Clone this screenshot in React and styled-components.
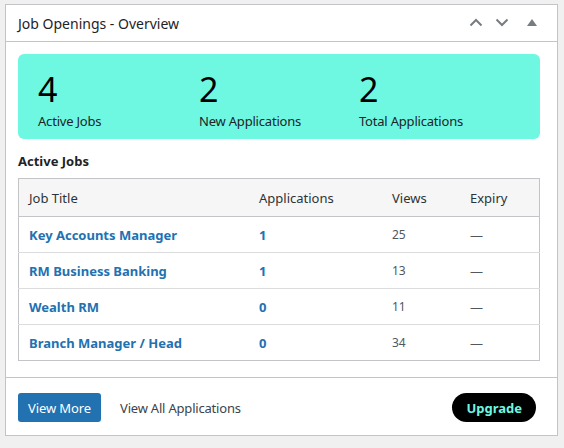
import React from "react";
import styled, { createGlobalStyle } from "styled-components";

const GlobalStyle = createGlobalStyle`
  html, body {
    margin: 0;
    padding: 0;
    background: #f0f0f1;
    font-family: "Noto Sans", "Open Sans", sans-serif;
    color: #1d2327;
  }
`;

const jobs = [
  { title: "Key Accounts Manager", apps: 1, views: 25 },
  { title: "RM Business Banking", apps: 1, views: 13 },
  { title: "Wealth RM", apps: 0, views: 11 },
  { title: "Branch Manager / Head", apps: 0, views: 34 },
];

const stats = [
  { value: 4, label: "Active Jobs" },
  { value: 2, label: "New Applications" },
  { value: 2, label: "Total Applications" },
];

const Page = styled.div`
  padding: 4px 6px 10px 5px;
`;

const Card = styled.div`
  background: #fff;
  border: 1px solid #c3c4c7;
`;

const Header = styled.div`
  height: 36px;
  display: flex;
  align-items: center;
  padding: 0 12px;
  border-bottom: 1px solid #c3c4c7;
`;

const Title = styled.h2`
  flex: 1;
  margin: 0;
  font-size: 14px;
  font-weight: 400;
  color: #1d2327;
`;

const Controls = styled.div`
  display: flex;
  align-items: center;
  gap: 8px;
  color: #787c82;
  margin-top: -2px;
`;

const IconBtn = styled.span`
  width: ${(p) => p.w || 18}px;
  height: 18px;
  display: flex;
  align-items: center;
  justify-content: center;
`;

const Body = styled.div`
  padding: 12px 17px 16px 12px;
`;

const StatsBox = styled.div`
  background: #6ef8e2;
  border-radius: 6px;
  padding: 14px 20px 9px;
  display: grid;
  grid-template-columns: 161px 160px 1fr;
`;

const Stat = styled.div`
  display: flex;
  flex-direction: column;
`;

const Number = styled.span`
  font-size: 34px;
  line-height: 42px;
  color: #000;
`;

const StatLabel = styled.span`
  font-size: 13px;
  line-height: 18px;
  margin-top: 2px;
  color: #1d2327;
  letter-spacing: -0.2px;
`;

const SectionTitle = styled.h3`
  margin: 13px 0 8px;
  font-size: 13px;
  line-height: 18px;
  font-weight: 700;
  color: #1d2327;
`;

const Table = styled.table`
  width: 100%;
  border-collapse: collapse;
  table-layout: fixed;
  border: 1px solid #c3c4c7;
  font-size: 13px;
`;

const Th = styled.th`
  width: ${(p) => (p.w ? `${p.w}px` : "auto")};
  text-align: left;
  font-weight: 400;
  background: #f6f6f6;
  color: #2c3338;
  height: 37px;
  padding: 0 10px;
  border-bottom: 1px solid #c3c4c7;
`;

const Tr = styled.tr`
  & + & td {
    border-top: 1px solid #dcdcde;
  }
`;

const Td = styled.td`
  height: 35px;
  padding: 0 10px;
  font-size: ${(p) => (p.small ? "12px" : "13px")};
  color: ${(p) => (p.link ? "#2271b1" : "#50575e")};
  font-weight: ${(p) => (p.link ? 700 : 400)};
`;

const Footer = styled.div`
  border-top: 1px solid #c3c4c7;
  padding: 15px 21px 13px 12px;
  display: flex;
  align-items: center;
`;

const Primary = styled.button`
  height: 29px;
  padding: 0 10px;
  background: #2271b1;
  color: #fff;
  border: 0;
  border-radius: 3px;
  font-family: inherit;
  font-size: 13px;
  letter-spacing: -0.1px;
`;

const TextLink = styled.a`
  margin-left: 19px;
  font-size: 13px;
  color: #3c434a;
  text-decoration: none;
  letter-spacing: -0.2px;
  flex: 1;
`;

const Upgrade = styled.button`
  height: 29px;
  padding: 0 14px;
  background: #000;
  color: #6ef8e2;
  border: 0;
  border-radius: 15px;
  font-family: inherit;
  font-weight: 700;
  font-size: 13px;
`;

const Chevron = ({ up }) => (
  <svg width="14" height="9" viewBox="0 0 14 9" fill="none">
    <path
      d={up ? "M1.5 7.5 L7 2 L12.5 7.5" : "M1.5 1.5 L7 7 L12.5 1.5"}
      stroke="currentColor"
      strokeWidth="2"
    />
  </svg>
);

const App = () => {
  return (
    <Page>
      <GlobalStyle />
      <Card>
        <Header>
          <Title>Job Openings - Overview</Title>
          <Controls>
            <IconBtn>
              <Chevron up />
            </IconBtn>
            <IconBtn>
              <Chevron />
            </IconBtn>
            <IconBtn w={26}>
              <svg width="10" height="7" viewBox="0 0 10 7">
                <path d="M5 0 L10 7 L0 7 Z" fill="currentColor" />
              </svg>
            </IconBtn>
          </Controls>
        </Header>
        <Body>
          <StatsBox>
            {stats.map((s) => (
              <Stat key={s.label}>
                <Number>{s.value}</Number>
                <StatLabel>{s.label}</StatLabel>
              </Stat>
            ))}
          </StatsBox>
          <SectionTitle>Active Jobs</SectionTitle>
          <Table>
            <thead>
              <tr>
                <Th w={210}>Job Title</Th>
                <Th w={113}>Applications</Th>
                <Th w={58}>Views</Th>
                <Th>Expiry</Th>
              </tr>
            </thead>
            <tbody>
              {jobs.map((j) => (
                <Tr key={j.title}>
                  <Td link>{j.title}</Td>
                  <Td link>{j.apps}</Td>
                  <Td small>{j.views}</Td>
                  <Td>—</Td>
                </Tr>
              ))}
            </tbody>
          </Table>
        </Body>
        <Footer>
          <Primary>View More</Primary>
          <TextLink href="#">View All Applications</TextLink>
          <Upgrade>Upgrade</Upgrade>
        </Footer>
      </Card>
    </Page>
  );
};

export default App;
